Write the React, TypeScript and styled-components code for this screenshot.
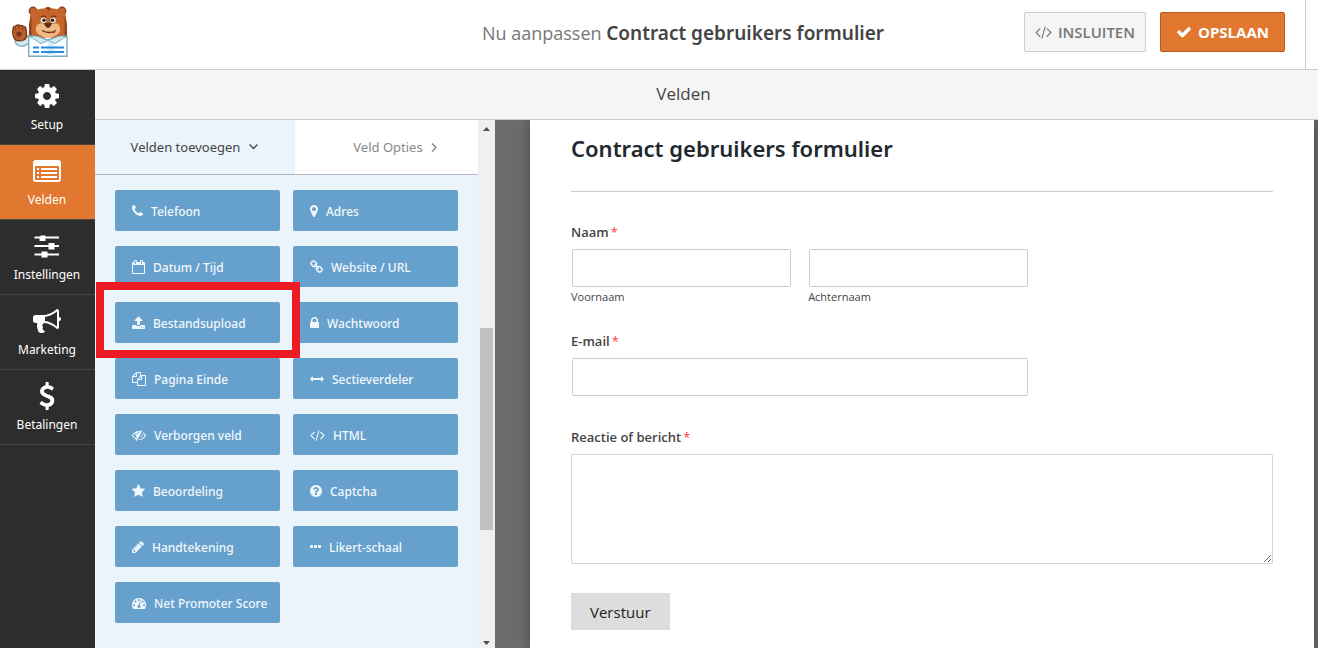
import React from 'react';
import styled, { createGlobalStyle, css } from 'styled-components';

const GlobalStyle = createGlobalStyle`
  *, *::before, *::after { box-sizing: border-box; }
  body {
    margin: 0;
    background: #fff;
    color: #444;
    font-family: 'Open Sans', 'Noto Sans', sans-serif;
    font-size: 13px;
    line-height: 20px;
  }
  button, input, textarea { font-family: inherit; }
`;

/* ---------- icons ---------- */

type Glyph = { w: number; d: string };

const glyphs: Record<string, Glyph> = {
  phone: { w: 11, d: 'M1600 1240q0 27-10 70.5t-21 68.5q-21 50-122 106-94 51-186 51-27 0-53-3.5t-57.5-12.5-47-14.5-55.5-20.5-49-18q-98-35-175-83-127-79-264-216t-216-264q-48-77-83-175-3-9-18-49t-20.5-55.5-14.5-47-12.5-57.5-3.5-53q0-92 51-186 56-101 106-122 25-11 68.5-21t70.5-10q14 0 21 3 18 6 53 76 11 19 30 54t35 63.5 31 53.5q3 4 17.5 25t21.5 35.5 7 28.5q0 20-28.5 50t-62 55-62 53-28.5 46q0 9 5 22.5t8.5 20.5 14 24 11.5 19q76 137 174 235t235 174q2 1 19 11.5t24 14 20.5 8.5 22.5 5q18 0 46-28.5t53-62 55-62 50-28.5q14 0 28.5 7t35.5 21.5 25 17.5q25 15 53.5 31t63.5 35 54 30q70 35 76 53 3 7 3 21z' },
  calendar: { w: 13, d: 'M192 1664h1408v-1024h-1408v1024zm384-1216v-288q0-14-9-23t-23-9h-64q-14 0-23 9t-9 23v288q0 14 9 23t23 9h64q14 0 23-9t9-23zm768 0v-288q0-14-9-23t-23-9h-64q-14 0-23 9t-9 23v288q0 14 9 23t23 9h64q14 0 23-9t9-23zm384-64v1280q0 52-38 90t-90 38h-1408q-52 0-90-38t-38-90v-1280q0-52 38-90t90-38h128v-96q0-66 47-113t113-47h64q66 0 113 47t47 113v96h384v-96q0-66 47-113t113-47h64q66 0 113 47t47 113v96h128q52 0 90 38t38 90z' },
  upload: { w: 13, d: 'M1344 1472q0-26-19-45t-45-19-45 19-19 45 19 45 45 19 45-19 19-45zm256 0q0-26-19-45t-45-19-45 19-19 45 19 45 45 19 45-19 19-45zm128-224v320q0 40-28 68t-68 28h-1472q-40 0-68-28t-28-68v-320q0-40 28-68t68-28h427q21 56 70.5 92t110.5 36h256q61 0 110.5-36t70.5-92h427q40 0 68 28t28 68zm-325-648q-17 40-59 40h-256v448q0 26-19 45t-45 19h-256q-26 0-45-19t-19-45v-448h-256q-42 0-59-40-17-39 14-69l448-448q18-19 45-19t45 19l448 448q31 30 14 69z' },
  files: { w: 14, d: 'M1696 384q40 0 68 28t28 68v1216q0 40-28 68t-68 28h-960q-40 0-68-28t-28-68v-288h-544q-40 0-68-28t-28-68v-672q0-40 20-88t48-76l408-408q28-28 76-48t88-20h416q40 0 68 28t28 68v328q68-40 128-40h416zm-544 213l-299 299h299v-299zm-640-384l-299 299h299v-299zm196 647l316-316v-416h-384v416q0 40-28 68t-68 28h-416v640h512v-256q0-40 20-88t48-76zm956 804v-1152h-384v416q0 40-28 68t-68 28h-416v640h896z' },
  eyeSlash: { w: 14, d: 'M555 1335l78-141q-87-63-136-159t-49-203q0-121 61-225-229 117-381 353 167 258 427 375zm389-759q0-20-14-34t-34-14q-125 0-214.5 89.5t-89.5 214.5q0 20 14 34t34 14 34-14 14-34q0-86 61-147t147-61q20 0 34-14t14-34zm363-191q0 7-1 9-106 189-316 567t-315 566l-49 89q-10 16-28 16-12 0-134-70-16-10-16-28 0-12 44-87-143-65-263.5-173t-208.5-245q-20-31-20-69t20-69q153-235 380-371t496-136q89 0 180 17l54-97q10-16 28-16 5 0 18 6t31 15.5 33 18.5 31.5 18.5 19.5 11.5q16 10 16 27zm37 447q0 139-79 253.5t-209 164.5l280-502q8 45 8 84zm448 128q0 35-20 69-39 64-109 145-150 172-347.5 267t-419.5 95l74-132q212-18 392.5-137t301.5-307q-115-179-282-294l63-112q95 64 182.5 153t144.5 184q20 34 20 69z' },
  star: { w: 13, d: 'M1728 647q0 22-26 48l-363 354 86 500q1 7 1 20 0 21-10.5 35.5t-30.5 14.5q-19 0-40-12l-449-236-449 236q-22 12-40 12-21 0-31.5-14.5t-10.5-35.5q0-6 2-20l86-500-364-354q-25-27-25-48 0-37 56-46l502-73 225-455q19-41 49-41t49 41l225 455 502 73q56 9 56 46z' },
  pencil: { w: 12, d: 'M491 1536l91-91-235-235-91 91v107h128v128h107zm523-928q0-22-22-22-10 0-17 7l-542 542q-7 7-7 17 0 22 22 22 10 0 17-7l542-542q7-7 7-17zm-54-192l416 416-832 832h-416v-416zm683 96q0 53-37 90l-166 166-416-416 166-165q36-38 90-38 53 0 91 38l235 234q37 39 37 91z' },
  gauge: { w: 14, d: 'M384 1152q0-53-37.5-90.5t-90.5-37.5-90.5 37.5-37.5 90.5 37.5 90.5 90.5 37.5 90.5-37.5 37.5-90.5zm192-448q0-53-37.5-90.5t-90.5-37.5-90.5 37.5-37.5 90.5 37.5 90.5 90.5 37.5 90.5-37.5 37.5-90.5zm428 481l101-382q6-26-7.5-48.5t-38.5-29.5-48 6.5-30 39.5l-101 382q-60 5-107 43.5t-63 98.5q-20 77 20 146t117 89 146-20 89-117q16-60-6-117t-72-91zm660-33q0-53-37.5-90.5t-90.5-37.5-90.5 37.5-37.5 90.5 37.5 90.5 90.5 37.5 90.5-37.5 37.5-90.5zm-640-640q0-53-37.5-90.5t-90.5-37.5-90.5 37.5-37.5 90.5 37.5 90.5 90.5 37.5 90.5-37.5 37.5-90.5zm448 192q0-53-37.5-90.5t-90.5-37.5-90.5 37.5-37.5 90.5 37.5 90.5 90.5 37.5 90.5-37.5 37.5-90.5zm320 448q0 261-141 483-19 29-54 29h-1402q-35 0-54-29-141-221-141-483 0-182 71-348t191-286 286-191 348-71 348 71 286 191 191 286 71 348z' },
  marker: { w: 8, d: 'M1152 640q0-106-75-181t-181-75-181 75-75 181 75 181 181 75 181-75 75-181zm256 0q0 109-33 179l-364 774q-16 33-47.5 52t-67.5 19-67.5-19-46.5-52l-365-774q-33-70-33-179 0-212 150-362t362-150 362 150 150 362z' },
  link: { w: 13, d: 'M1520 1216q0-40-28-68l-208-208q-28-28-68-28-42 0-72 32 3 3 19 18.5t21.5 21.5 15 19 13 25.5 3.5 27.5q0 40-28 68t-68 28q-15 0-27.5-3.5t-25.5-13-19-15-21.5-21.5-18.5-19q-33 31-33 73 0 40 28 68l206 207q27 27 68 27 40 0 68-26l147-146q28-28 28-67zm-703-705q0-40-28-68l-206-207q-28-28-68-28-39 0-68 27l-147 146q-28 28-28 67 0 40 28 68l208 208q27 27 68 27 42 0 72-31-3-3-19-18.5t-21.5-21.5-15-19-13-25.5-3.5-27.5q0-40 28-68t68-28q15 0 27.5 3.5t25.5 13 19 15 21.5 21.5 18.5 19q33-31 33-73zm895 705q0 120-85 203l-147 146q-83 83-203 83-121 0-204-85l-206-207q-83-83-83-203 0-123 88-209l-88-88q-86 88-208 88-120 0-204-84l-208-208q-84-84-84-204t85-203l147-146q83-83 203-83 121 0 204 85l206 207q83 83 83 203 0 123-88 209l88 88q86-88 208-88 120 0 204 84l208 208q84 84 84 204z' },
  lock: { w: 9, d: 'M640 768h512v-192q0-106-75-181t-181-75-181 75-75 181v192zm832 96v576q0 40-28 68t-68 28h-960q-40 0-68-28t-28-68v-576q0-40 28-68t68-28h32v-192q0-184 132-316t316-132 316 132 132 316v192h32q40 0 68 28t28 68z' },
  arrows: { w: 14, d: 'M1792 896q0 26-19 45l-256 256q-19 19-45 19t-45-19-19-45v-128h-1024v128q0 26-19 45t-45 19-45-19l-256-256q-19-19-19-45t19-45l256-256q19-19 45-19t45 19 19 45v128h1024v-128q0-26 19-45t45-19 45 19l256 256q19 19 19 45z' },
  code: { w: 15, d: 'M553 1399l-50 50q-10 10-23 10t-23-10l-466-466q-10-10-10-23t10-23l466-466q10-10 23-10t23 10l50 50q10 10 10 23t-10 23l-393 393 393 393q10 10 10 23t-10 23zm591-1067l-373 1291q-4 13-15.5 19.5t-23.5 2.5l-62-17q-13-4-19.5-15.5t-2.5-24.5l373-1291q4-13 15.5-19.5t23.5-2.5l62 17q13 4 19.5 15.5t2.5 24.5zm657 651l-466 466q-10 10-23 10t-23-10l-50-50q-10-10-10-23t10-23l393-393-393-393q-10-10-10-23t10-23l50-50q10-10 23-10t23 10l466 466q10 10 10 23t-10 23z' },
  question: { w: 12, d: 'M1024 1376v-192q0-14-9-23t-23-9h-192q-14 0-23 9t-9 23v192q0 14 9 23t23 9h192q14 0 23-9t9-23zm256-672q0-88-55.5-163t-138.5-116-170-41q-243 0-371 213-15 24 8 42l132 100q7 6 19 6 16 0 25-12 53-68 86-92 34-24 86-24 48 0 85.5 26t37.5 59q0 38-20 61t-68 45q-63 28-115.5 86.5t-52.5 125.5v36q0 14 9 23t23 9h192q14 0 23-9t9-23q0-19 21.5-49.5t54.5-49.5q32-18 49-28.5t46-35 44.5-48 28-60.5 12.5-81zm384 192q0 209-103 385.5t-279.5 279.5-385.5 103-385.5-103-279.5-279.5-103-385.5 103-385.5 279.5-279.5 385.5-103 385.5 103 279.5 279.5 103 385.5z' },
  ellipsis: { w: 11, d: 'M576 736v192q0 40-28 68t-68 28h-192q-40 0-68-28t-28-68v-192q0-40 28-68t68-28h192q40 0 68 28t28 68zm512 0v192q0 40-28 68t-68 28h-192q-40 0-68-28t-28-68v-192q0-40 28-68t68-28h192q40 0 68 28t28 68zm512 0v192q0 40-28 68t-68 28h-192q-40 0-68-28t-28-68v-192q0-40 28-68t68-28h192q40 0 68 28t28 68z' },
  check: { w: 14, d: 'M1671 566q0 40-28 68l-724 724-136 136q-28 28-68 28t-68-28l-136-136-362-362q-28-28-28-68t28-68l136-136q28-28 68-28t68 28l294 295 656-657q28-28 68-28t68 28l136 136q28 28 28 68z' },
  cog: { w: 14, d: 'M1152 896q0-106-75-181t-181-75-181 75-75 181 75 181 181 75 181-75 75-181zm512-109v222q0 12-8 23t-20 13l-185 28q-19 54-39 91 35 50 107 138 10 12 10 25t-9 23q-27 37-99 108t-94 71q-12 0-26-9l-138-108q-44 23-91 38-16 136-29 186-7 28-36 28h-222q-14 0-24.5-8.5t-11.5-21.5l-28-184q-49-16-90-37l-141 107q-10 9-25 9-14 0-25-11-126-114-165-168-7-10-7-23 0-12 8-23 15-21 51-66.5t54-70.5q-27-50-41-99l-183-27q-13-2-21-12.5t-8-23.5v-222q0-12 8-23t19-13l186-28q14-46 39-92-40-57-107-138-10-12-10-24 0-10 9-23 26-36 98.5-107.5t94.5-71.5q13 0 26 10l138 107q44-23 91-38 16-136 29-186 7-28 36-28h222q14 0 24.5 8.5t11.5 21.5l28 184q49 16 90 37l142-107q9-9 24-9 13 0 25 10 129 119 165 170 7 8 7 22 0 12-8 23-15 21-51 66.5t-54 70.5q26 50 41 98l183 28q13 2 21 12.5t8 23.5z' },
  list: { w: 14, d: 'M1792 352v1088q0 66-47 113t-113 47h-1472q-66 0-113-47t-47-113v-1088q0-66 47-113t113-47h1472q66 0 113 47t47 113zM128 608v832q0 32 32 32h1472q32 0 32-32v-832q0-32-32-32h-1472q-32 0-32 32zM256 704h128v128h-128zM512 704h1024v128h-1024zM256 960h128v128h-128zM512 960h1024v128h-1024zM256 1216h128v128h-128zM512 1216h1024v128h-1024z' },
  sliders: { w: 14, d: 'M96 288h384v-64h320v64h864v128h-864v160h-384v-160h-320zM96 832h896v-128h384v128h288v128h-288v160h-384v-160h-896zM96 1376h448v-128h384v128h736v128h-736v128h-384v-128h-448z' },
  bullhorn: { w: 14, d: 'M1664 640q53 0 90.5 37.5t37.5 90.5-37.5 90.5-90.5 37.5v384q0 52-38 90t-90 38q-417-347-812-380-58 19-91 66t-31 100.5 40 92.5q-20 33-23 65.5t6 58 33.5 55 48 50 61.5 50.5q-29 58-111.5 83t-168.5 11.5-132-55.5q-7-23-29.5-87.5t-32-94.5-23-89-15-101 3.5-98.5 22-110.5h-122q-66 0-113-47t-47-113v-192q0-66 47-113t113-47h480q435 0 896-384 52 0 90 38t38 90v384zm-128 604v-954q-394 302-768 343v270q377 42 768 341z' },
  dollar: { w: 14, d: 'M1362 1185q0 153-99.5 263.5t-258.5 136.5v175q0 14-9 23t-23 9h-135q-13 0-22.5-9.5t-9.5-22.5v-175q-66-9-127.5-31t-101.5-44.5-74-48-46.5-37.5-17.5-18q-17-21-2-41l103-135q7-10 23-12 15-2 24 9l2 2q113 99 243 125 37 8 74 8 81 0 142.5-43t61.5-122q0-28-15-53t-33.5-42-58.5-37.5-66-32-80-32.5q-39-16-61.5-25t-61.5-26.5-62.5-31-56.5-35.5-53.5-42.5-43.5-49-35.5-58-21-66.5-8.5-78q0-138 98-242t255-134v-180q0-13 9.5-22.5t22.5-9.5h135q14 0 23 9t9 23v176q57 6 110.5 23t87 33.5 63.5 37.5 39 29 15 14q17 18 5 38l-81 146q-8 15-23 16-14 3-27-7-3-3-14.5-12t-39-26.5-58.5-32-74.5-26-85.5-11.5q-95 0-155 43t-60 111q0 26 8.5 48t29.5 41.5 39.5 33 56 31 60.5 27 70 27.5q53 20 81 31.5t76 35 75.5 42.5 62 50 53 63.5 31.5 76.5 13 94z' },
};

/* Glyph widths are given in units of 1/14 em, as in the icon font. */
function Icon({ name, size = 14 }: { name: string; size?: number }) {
  const g = glyphs[name];
  const vw = g.w * 128;
  return (
    <svg
      width={Math.round((g.w * size) / 14)}
      height={size}
      viewBox={`${(1792 - vw) / 2} 0 ${vw} 1792`}
      fill="currentColor"
      fillRule={name === 'list' ? 'evenodd' : undefined}
      aria-hidden="true"
    >
      <path d={g.d} />
    </svg>
  );
}

function Bear() {
  return (
    <svg width="58" height="52" viewBox="12 6 58 52" role="img" aria-label="WPForms">
      <path d="M15 40c0 5 5 7 9 6l5-3v-5l-3-3-2 4z" fill="#d3e8ef" stroke="#7fb0bf" strokeWidth="1.4" />
      <path d="M13 29q0-3 2.500-3l1-.6q2-1 3.500.4 1.500-1 3 .2 3 .5 3 3l.500 4q1 6-4 7.500-6 1.500-8.500-2.500-2-4-1-9z" fill="#b8602b" stroke="#733013" strokeWidth="1.200" />
      <path d="M16 33q3-2.500 6 0l-1 3q-2 1.500-4 0z" fill="#7d3518" />
      <path d="M15.500 27v3M19 26v3.500M22.500 27v3" stroke="#8a3f1c" strokeWidth="1" />
      <circle cx="33" cy="11" r="3.800" fill="#c0622b" stroke="#863d1b" strokeWidth="1.200" />
      <circle cx="62" cy="11" r="3.800" fill="#c0622b" stroke="#863d1b" strokeWidth="1.200" />
      <path d="M29 38V25l1.500-11q5-6 17.500-6t17.500 6L67 25v13z" fill="#c5642b" />
      <path d="M29 38V25l2.500-10v23zM67 38V25l-2.500-10v23z" fill="#93441d" />
      <path d="M45 8q3-2 6 0l-2 3z" fill="#8c401c" />
      <path d="M37 25q3-3 7-1h9q4-2 6 1 3 6-1 9l-7 4h-6l-7-4q-4-4-1-9z" fill="#f1b982" />
      <path d="M41 17q3-2 5 0M51 17q3-2 5 0" stroke="#612d18" strokeWidth="1.200" fill="none" />
      <circle cx="43.500" cy="20.300" r="2.800" fill="#e7f2ef" />
      <circle cx="53" cy="20.300" r="2.800" fill="#e7f2ef" />
      <circle cx="44" cy="20.300" r="1.800" fill="#242a32" />
      <circle cx="52.500" cy="20.300" r="1.800" fill="#242a32" />
      <path d="M44.500 23h7q1 2-3 5h-1q-4-3-3-5z" fill="#59291c" />
      <path d="M42 30.500q7 4 14 0" stroke="#5d2b1b" strokeWidth="1.300" fill="none" />
      <path d="M51.500 32.500q2-2 4-1-1 3-4 1z" fill="#c7313a" />
      <path d="M28.700 36l8 1 11 3 11-3 8.300-1v20.300H28.700z" fill="#fafdff" stroke="#76aebc" strokeWidth="1.400" />
      <path d="M30 36.500q4-1 8 0l10 4-7 3zM66 36.500q-4-1-8 0l-10 4 7 3z" fill="#d4e9ef" stroke="#76aebc" strokeWidth="1" />
      <path d="M48 41l6 3v12h-7z" fill="#dceef5" />
      <path d="M33 47.500h6M33 52h6M41 47.500h23M41 52h23" stroke="#278be0" strokeWidth="2" />
    </svg>
  );
}

/* ---------- page shell ---------- */

const Page = styled.div`
  display: flex;
  flex-direction: column;
  height: 100vh;
`;

const Header = styled.header`
  flex: none;
  display: grid;
  grid-template-columns: 48px 1fr auto 1fr;
  align-items: center;
  height: 70px;
  border-bottom: 1px solid #ccc;
`;

const LogoLink = styled.a`
  grid-column: 1 / 3;
  display: flex;
  padding: 0 0 6px 12px;
`;

const PageTitle = styled.div`
  padding-bottom: 3px;
  font-size: 18px;
  line-height: 28px;
  color: #777;
  white-space: nowrap;
  strong { color: #444; font-family: 'Noto Sans', sans-serif; font-size: 19px; font-weight: 600; }
`;

const Tools = styled.div`
  justify-self: end;
  align-self: stretch;
  display: flex;
  align-items: center;
  gap: 14px;
  margin-right: 12px;
  padding: 0 20px 6px 0;
  border-right: 1px solid #ccc;
`;

const ToolButton = styled.button<{ $primary?: boolean }>`
  display: flex;
  align-items: center;
  justify-content: center;
  gap: 6px;
  height: 40px;
  padding: 0 ${(p) => (p.$primary ? 15 : 10)}px;
  border: 1px solid ${(p) => (p.$primary ? '#b85a1b' : '#ccc')};
  border-radius: 2px;
  background: ${(p) => (p.$primary ? '#e27730' : '#f5f5f5')};
  color: ${(p) => (p.$primary ? '#fff' : '#777')};
  font-size: 15px;
  font-weight: ${(p) => (p.$primary ? 700 : 600)};
  line-height: 20px;
`;

const Body = styled.div`
  flex: 1;
  display: flex;
  min-height: 0;
`;

const Sidebar = styled.nav`
  flex: none;
  display: flex;
  flex-direction: column;
  width: 95px;
  background: #2d2d2d;
`;

const SideItem = styled.button<{ $active?: boolean }>`
  display: flex;
  flex-direction: column;
  align-items: center;
  gap: 5px;
  height: 75px;
  padding: 12px 1px 0 0;
  border: 0;
  border-bottom: 1px solid #444;
  background: ${(p) => (p.$active ? '#e27730' : 'transparent')};
  color: #fff;
  font-family: 'Noto Sans', sans-serif;
  font-size: 12px;
  line-height: 20px;
`;

const Workspace = styled.main`
  flex: 1;
  display: flex;
  flex-direction: column;
  min-width: 0;
`;

const SectionBar = styled.div`
  flex: none;
  height: 50px;
  padding-right: 46px;
  border-bottom: 1px solid #ccc;
  background: #f5f5f5;
  text-align: center;
  font-size: 17px;
  line-height: 48px;
`;

const Columns = styled.div`
  flex: 1;
  display: flex;
  min-height: 0;
  overflow: hidden;
`;

/* ---------- field panel ---------- */

const Panel = styled.section`
  flex: none;
  display: flex;
  width: 400px;
  background: #ebf3fb;
`;

const PanelContent = styled.div`
  flex: 1;
  min-width: 0;
  overflow: hidden;
`;

const Tabs = styled.div`
  display: flex;
  height: 55px;
  border-bottom: 1px solid #b0b9c5;
`;

const Tab = styled.button<{ $active?: boolean }>`
  display: flex;
  align-items: center;
  justify-content: center;
  gap: 8px;
  border: 0;
  padding: 0;
  font-family: 'Noto Sans', sans-serif;
  font-size: 13px;
  ${(p) =>
    p.$active
      ? css`flex: none; width: 200px; background: transparent; color: #444;`
      : css`flex: 1; padding-left: 18px; background: #fff; color: #888;`}
`;

const FieldGrid = styled.div`
  display: grid;
  grid-template-columns: 1fr 1fr;
  gap: 15px 13px;
  padding: 15px 20px;
`;

const FieldCell = styled.div`
  position: relative;
  display: flex;
`;

const FieldButton = styled.button`
  flex: 1;
  display: flex;
  align-items: center;
  gap: 8px;
  height: 41px;
  padding: 1px 0 0 17px;
  border: 0;
  border-radius: 2px;
  background: #66a1cd;
  color: #f2f7fb;
  font-family: 'Noto Sans', sans-serif;
  font-size: 12px;
  font-weight: 500;
  white-space: nowrap;
`;

const Highlight = styled.div`
  position: absolute;
  z-index: 1;
  top: -20px;
  right: -20px;
  bottom: -15px;
  left: -19px;
  border: 8px solid #ed1c24;
  pointer-events: none;
`;

const Scrollbar = styled.div`
  flex: none;
  display: flex;
  flex-direction: column;
  width: 17px;
  padding: 0 2px;
  background: #f0f0f0;
`;

const ScrollArrow = styled.svg`
  flex: none;
  width: 13px;
  height: 17px;
  fill: #505050;
`;

const Track = styled.div<{ $size: number; $thumb?: boolean }>`
  flex: ${(p) => p.$size} 0 0;
  background: ${(p) => (p.$thumb ? '#c1c1c1' : 'transparent')};
`;

/* ---------- form preview ---------- */

const Preview = styled.section`
  flex: 1;
  display: flex;
  min-width: 0;
  padding: 0 4px 0 35px;
  background: #6b6b6b;
`;

const Form = styled.form`
  flex: 1;
  display: flex;
  flex-direction: column;
  align-items: flex-start;
  min-width: 0;
  padding: 11px 41px;
  background: #fff;
  box-shadow: 0 0 10px rgba(0, 0, 0, 0.35);
`;

const FormTitle = styled.h1`
  align-self: stretch;
  margin: 0 0 30px;
  padding-bottom: 26px;
  border-bottom: 1px solid #ccc;
  color: #23282d;
  font-family: 'Noto Sans', sans-serif;
  font-size: 22px;
  font-weight: 600;
  line-height: 34px;
`;

const Group = styled.div<{ $gap: number; $wide?: boolean }>`
  width: ${(p) => (p.$wide ? '100%' : 'calc(65% + 2px)')};
  margin-bottom: ${(p) => p.$gap}px;
`;

const Label = styled.label`
  display: block;
  margin-bottom: 7px;
  font-size: 13px;
  font-weight: 600;
  line-height: 20px;
`;

const Star = styled.span`
  margin-left: 2px;
  color: #ff3b3b;
  font-weight: 400;
`;

const NameRow = styled.div`
  display: grid;
  grid-template-columns: 1fr 1fr;
  gap: 16px;
`;

const InputBox = styled.div`
  padding: 0 1px;
`;

const Input = styled.input`
  display: block;
  width: 100%;
  height: 38px;
  border: 1px solid #ccc;
  border-radius: 2px;
  background: #fff;
`;

const SubLabel = styled.label`
  display: block;
  font-size: 11px;
  line-height: 20px;
`;

const TextArea = styled.textarea`
  display: block;
  width: 100%;
  height: 110px;
  border: 1px solid #d3d3d3;
  border-radius: 2px;
`;

const Submit = styled.button`
  height: 37px;
  padding: 0 19px;
  border: 0;
  background: #ddd;
  color: #222;
  font-size: 15px;
`;

const sideItems = [
  ['cog', 'Setup'],
  ['list', 'Velden'],
  ['sliders', 'Instellingen'],
  ['bullhorn', 'Marketing'],
  ['dollar', 'Betalingen'],
];

const fields = [
  ['phone', 'Telefoon'],
  ['marker', 'Adres'],
  ['calendar', 'Datum / Tijd'],
  ['link', 'Website / URL'],
  ['upload', 'Bestandsupload'],
  ['lock', 'Wachtwoord'],
  ['files', 'Pagina Einde'],
  ['arrows', 'Sectieverdeler'],
  ['eyeSlash', 'Verborgen veld'],
  ['code', 'HTML'],
  ['star', 'Beoordeling'],
  ['question', 'Captcha'],
  ['pencil', 'Handtekening'],
  ['ellipsis', 'Likert-schaal'],
  ['gauge', 'Net Promoter Score'],
];

export default function App() {
  return (
    <Page>
      <GlobalStyle />
      <Header>
        <LogoLink href="#"><Bear /></LogoLink>
        <PageTitle>Nu aanpassen <strong>Contract gebruikers formulier</strong></PageTitle>
        <Tools>
          <ToolButton type="button"><Icon name="code" size={16} />INSLUITEN</ToolButton>
          <ToolButton type="button" $primary><Icon name="check" size={16} />OPSLAAN</ToolButton>
        </Tools>
      </Header>
      <Body>
        <Sidebar>
          {sideItems.map(([icon, label]) => (
            <SideItem key={label} type="button" $active={label === 'Velden'}>
              <Icon name={icon} size={28} />
              {label}
            </SideItem>
          ))}
        </Sidebar>
        <Workspace>
          <SectionBar>Velden</SectionBar>
          <Columns>
            <Panel>
              <PanelContent>
                <Tabs>
                  <Tab type="button" $active>
                    Velden toevoegen
                    <svg width="11" height="10" viewBox="0 0 11 10" fill="none" stroke="currentColor" strokeWidth="1.3"><path d="M1.500 2.500l4 4 4-4" /></svg>
                  </Tab>
                  <Tab type="button">
                    Veld Opties
                    <svg width="7" height="11" viewBox="0 0 7 11" fill="none" stroke="currentColor" strokeWidth="1.500"><path d="M1 1.500l4 4-4 4" /></svg>
                  </Tab>
                </Tabs>
                <FieldGrid>
                  {fields.map(([icon, label]) => (
                    <FieldCell key={label}>
                      <FieldButton type="button"><Icon name={icon} />{label}</FieldButton>
                      {icon === 'upload' && <Highlight />}
                    </FieldCell>
                  ))}
                </FieldGrid>
              </PanelContent>
              <Scrollbar aria-hidden="true">
                <ScrollArrow viewBox="0 0 13 17"><path d="M3 11l3.500-4 3.500 4z" /></ScrollArrow>
                <Track $size={191} />
                <Track $size={202} $thumb />
                <Track $size={101} />
                <ScrollArrow viewBox="0 0 13 17"><path d="M3 10l3.500 4 3.500-4z" /></ScrollArrow>
              </Scrollbar>
            </Panel>
            <Preview>
              <Form onSubmit={(e) => e.preventDefault()}>
                <FormTitle>Contract gebruikers formulier</FormTitle>
                <Group $gap={24}>
                  <Label htmlFor="first">Naam<Star>*</Star></Label>
                  <NameRow>
                    <div>
                      <InputBox><Input id="first" type="text" /></InputBox>
                      <SubLabel htmlFor="first">Voornaam</SubLabel>
                    </div>
                    <div>
                      <InputBox><Input id="last" type="text" /></InputBox>
                      <SubLabel htmlFor="last">Achternaam</SubLabel>
                    </div>
                  </NameRow>
                </Group>
                <Group $gap={31}>
                  <Label htmlFor="email">E-mail<Star>*</Star></Label>
                  <InputBox><Input id="email" type="email" /></InputBox>
                </Group>
                <Group $gap={29} $wide>
                  <Label htmlFor="message">Reactie of bericht<Star>*</Star></Label>
                  <TextArea id="message" />
                </Group>
                <Submit type="submit">Verstuur</Submit>
              </Form>
            </Preview>
          </Columns>
        </Workspace>
      </Body>
    </Page>
  );
}
